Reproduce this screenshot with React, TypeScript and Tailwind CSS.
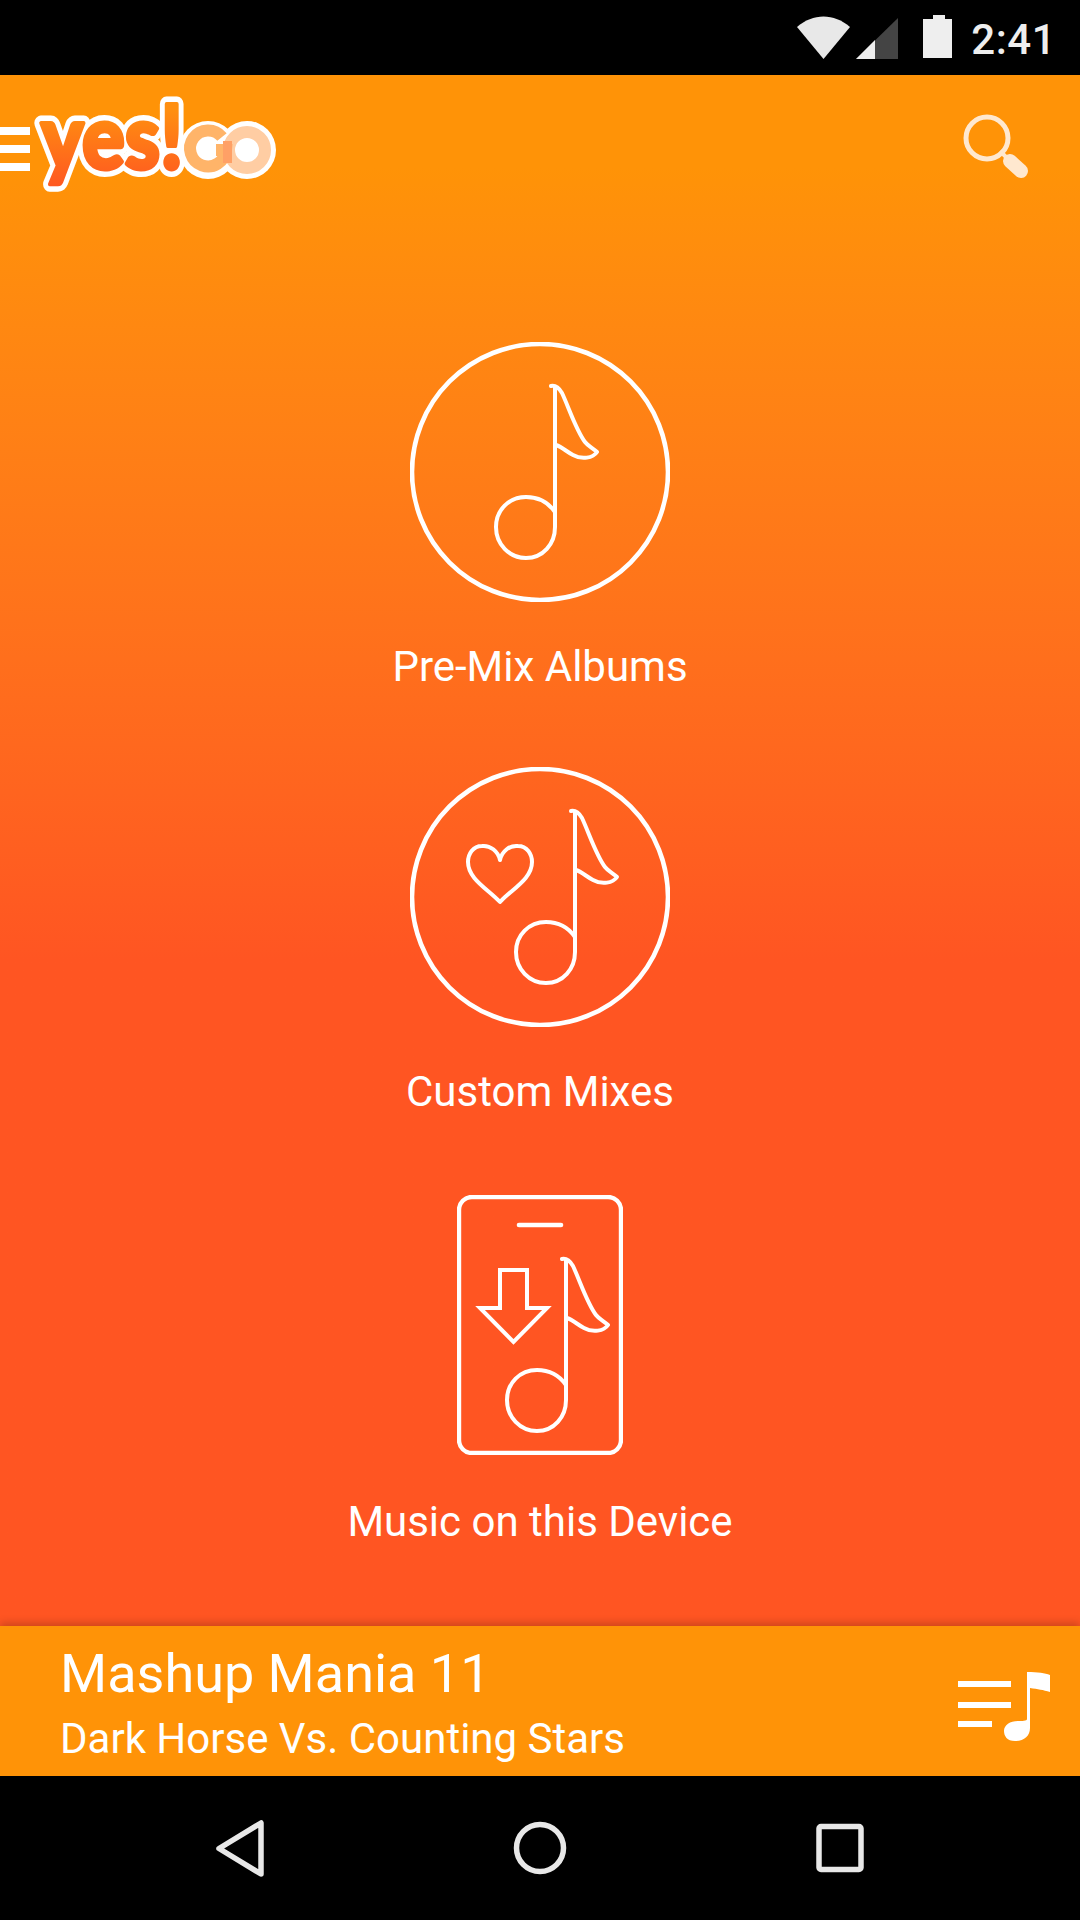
import React from "react";

const NOTE =
  "M145 170 C138 160 127 155 116 155 C99 155 86 168 86 185 C86 202 99 216 116 216 C133 216 145 202 145 185 V46 M141 44 C146 43 149 46 152 51 C159 66 166 88 175 100 C178 104 183 106 187 110 C183 116 172 118 163 113 C157 110 152 105 146 103";

function CircleIcon({ children }: { children: React.ReactNode }) {
  return (
    <svg width="260" height="260" viewBox="0 0 260 260" fill="none" stroke="#fff" strokeWidth="4" strokeLinejoin="round" strokeLinecap="round">
      <circle cx="130" cy="130" r="128" strokeWidth="4.6" />
      {children}
    </svg>
  );
}

function Item({ icon, label, className = "", labelClass = "mt-[41px]" }: { icon: React.ReactNode; label: string; className?: string; labelClass?: string }) {
  return (
    <div className={"flex flex-col items-center " + className}>
      <div className="h-[260px] flex items-center justify-center">{icon}</div>
      <div className={labelClass + " h-[48px] leading-[48px] text-[42px] text-white"}>{label}</div>
    </div>
  );
}

function Logo() {
  const textProps = {
    x: 11,
    y: 79,
    fontFamily: "Lato, sans-serif",
    fontWeight: 900,
    fontSize: 90,
    textLength: 142,
    lengthAdjust: "spacingAndGlyphs" as const,
    strokeLinejoin: "round" as const,
  };
  return (
    <svg width="250" height="125" viewBox="0 0 250 125" className="block overflow-visible">
      <defs>
        <linearGradient id="lg" gradientUnits="userSpaceOnUse" x1="0" y1="20" x2="0" y2="100">
          <stop offset="0" stopColor="#ff8f10" />
          <stop offset="1" stopColor="#ff5522" />
        </linearGradient>
      </defs>
      <circle cx="178" cy="60" r="29" fill="#fff" />
      <circle cx="217" cy="60" r="29" fill="#fff" />
      <circle cx="217" cy="60" r="18" fill="none" stroke="#ffcda3" strokeWidth="12" />
      <path d="M192 47 A18 18 0 1 0 196 60 H186" fill="none" stroke="#ffb469" strokeWidth="12" />
      <path d="M193 51 H202 V73 H193 Z" fill="#ffa066" />
      <text {...textProps} fill="#fff" stroke="#fff" strokeWidth="15">
        yes!
      </text>
      <text {...textProps} fill="url(#lg)" stroke="url(#lg)" strokeWidth="4">
        yes!
      </text>
    </svg>
  );
}

export default function App() {
  return (
    <div className="w-[1080px] h-[1920px] flex flex-col bg-black font-['Roboto',sans-serif] overflow-hidden">
      {/* Status bar */}
      <div className="h-[75px] shrink-0 bg-black relative flex items-center justify-end pr-[24px]">
        <svg width="110" height="50" viewBox="0 0 110 50" className="mr-[16px] mt-[6px]">
          <path d="M0 11 C16 -3 37 -3 53 11 L26.5 43 Z" fill="#e8e8e8" />
          <path d="M59 43 L101 2 V43 Z" fill="#444" />
          <path d="M59 43 L78 24 V43 Z" fill="#eee" />
        </svg>
        <svg width="30" height="44" viewBox="0 0 30 44" className="mr-[18px] mt-[-2px]">
          <path d="M10 0 H22 V4 H29 V43 H0 V4 H10 Z" fill="#eee" />
        </svg>
        <span className="text-[42px] font-medium text-[#eee] leading-none tracking-[0.5px] mt-[4px]">2:41</span>
      </div>

      {/* Main */}
      <div className="flex-1 flex flex-col bg-linear-to-b from-[#ff9307] from-[6%] to-[#ff5522] to-[57%]">
        <div className="h-[125px] shrink-0 flex items-start relative">
          <div className="flex flex-col gap-[10px] mt-[52px]">
            <div className="w-[30px] h-[8px] bg-white" />
            <div className="w-[30px] h-[8px] bg-white" />
            <div className="w-[30px] h-[8px] bg-white" />
          </div>
          <div className="mt-[15px]">
            <Logo />
          </div>
          <svg width="70" height="76" viewBox="0 0 70 76" className="ml-auto mr-[48px] mt-[38px]" fill="none" stroke="#ffe8cf">
            <circle cx="25" cy="25" r="21" strokeWidth="5" />
            <path d="M38 38 L48 48" strokeWidth="4" />
            <path d="M48 48 L59 58" strokeWidth="14" strokeLinecap="round" />
          </svg>
        </div>

        <div className="flex-1 flex flex-col items-center pt-[142px] gap-[76px]">
          <Item
            label="Pre-Mix Albums"
            icon={
              <CircleIcon>
                <path d={NOTE} />
              </CircleIcon>
            }
          />
          <Item
            label="Custom Mixes"
            icon={
              <CircleIcon>
                <path d={NOTE} transform="translate(20 0)" />
                <path d="M90 93 C88 84 80 78 72 79 C63 79 58 87 58 95 C58 112 78 122 90 135 C102 122 122 112 122 95 C122 87 117 79 108 79 C100 78 92 84 90 93 Z" />
              </CircleIcon>
            }
          />
          <Item
            label="Music on this Device"
            className="mt-[3px]"
            labelClass="mt-[43px]"
            icon={
              <svg width="166" height="260" viewBox="0 0 166 260" fill="none" stroke="#fff" strokeWidth="4" strokeLinejoin="round" strokeLinecap="round">
                <rect x="2" y="2" width="162" height="256" rx="13" strokeWidth="4.4" />
                <path d="M62 30 H104" strokeWidth="4.6" />
                <path d="M43 75 H70 V113 H90 L56.5 147 L23 113 H43 Z" strokeLinejoin="miter" />
                <path d={NOTE} transform="translate(-36 20)" />
              </svg>
            }
          />
        </div>
      </div>

      {/* Now playing */}
      <div className="h-[150px] shrink-0 relative bg-[#ff9307] shadow-[0_-3px_8px_rgba(0,0,0,0.2)] flex items-center pl-[60px] pr-[26px]">
        <div className="flex flex-col pt-[4px]">
          <div className="text-[54px] leading-[60px] text-white">Mashup Mania 11</div>
          <div className="text-[42px] leading-[46px] text-white mt-[12px]">Dark Horse Vs. Counting Stars</div>
        </div>
        <svg width="96" height="70" viewBox="0 0 96 70" className="ml-auto mt-[12px]">
          <path d="M0 9 H53 V15 H0 Z M0 30 H53 V36 H0 Z M0 49 H34 V55 H0 Z" fill="#fff" />
          <path d="M69 0 C80 0 87 1 92 3 V20 C85 18 80 17 72 16 V56 C72 64 66 69 57 69 C49 69 46 64 46 59 C46 53 52 49 60 49 C64 49 69 49 69 47 Z" fill="#fff" />
        </svg>
      </div>

      {/* Nav bar */}
      <div className="h-[144px] shrink-0 bg-black flex items-center relative">
        <svg width="1080" height="144" viewBox="0 0 1080 144" fill="none" stroke="#e8e8e8" strokeWidth="5.5" strokeLinejoin="round">
          <path d="M261 47 V98 L219 72.5 Z" />
          <circle cx="540" cy="72" r="23.5" />
          <rect x="819" y="50.5" width="42" height="43" rx="2" />
        </svg>
      </div>
    </div>
  );
}
